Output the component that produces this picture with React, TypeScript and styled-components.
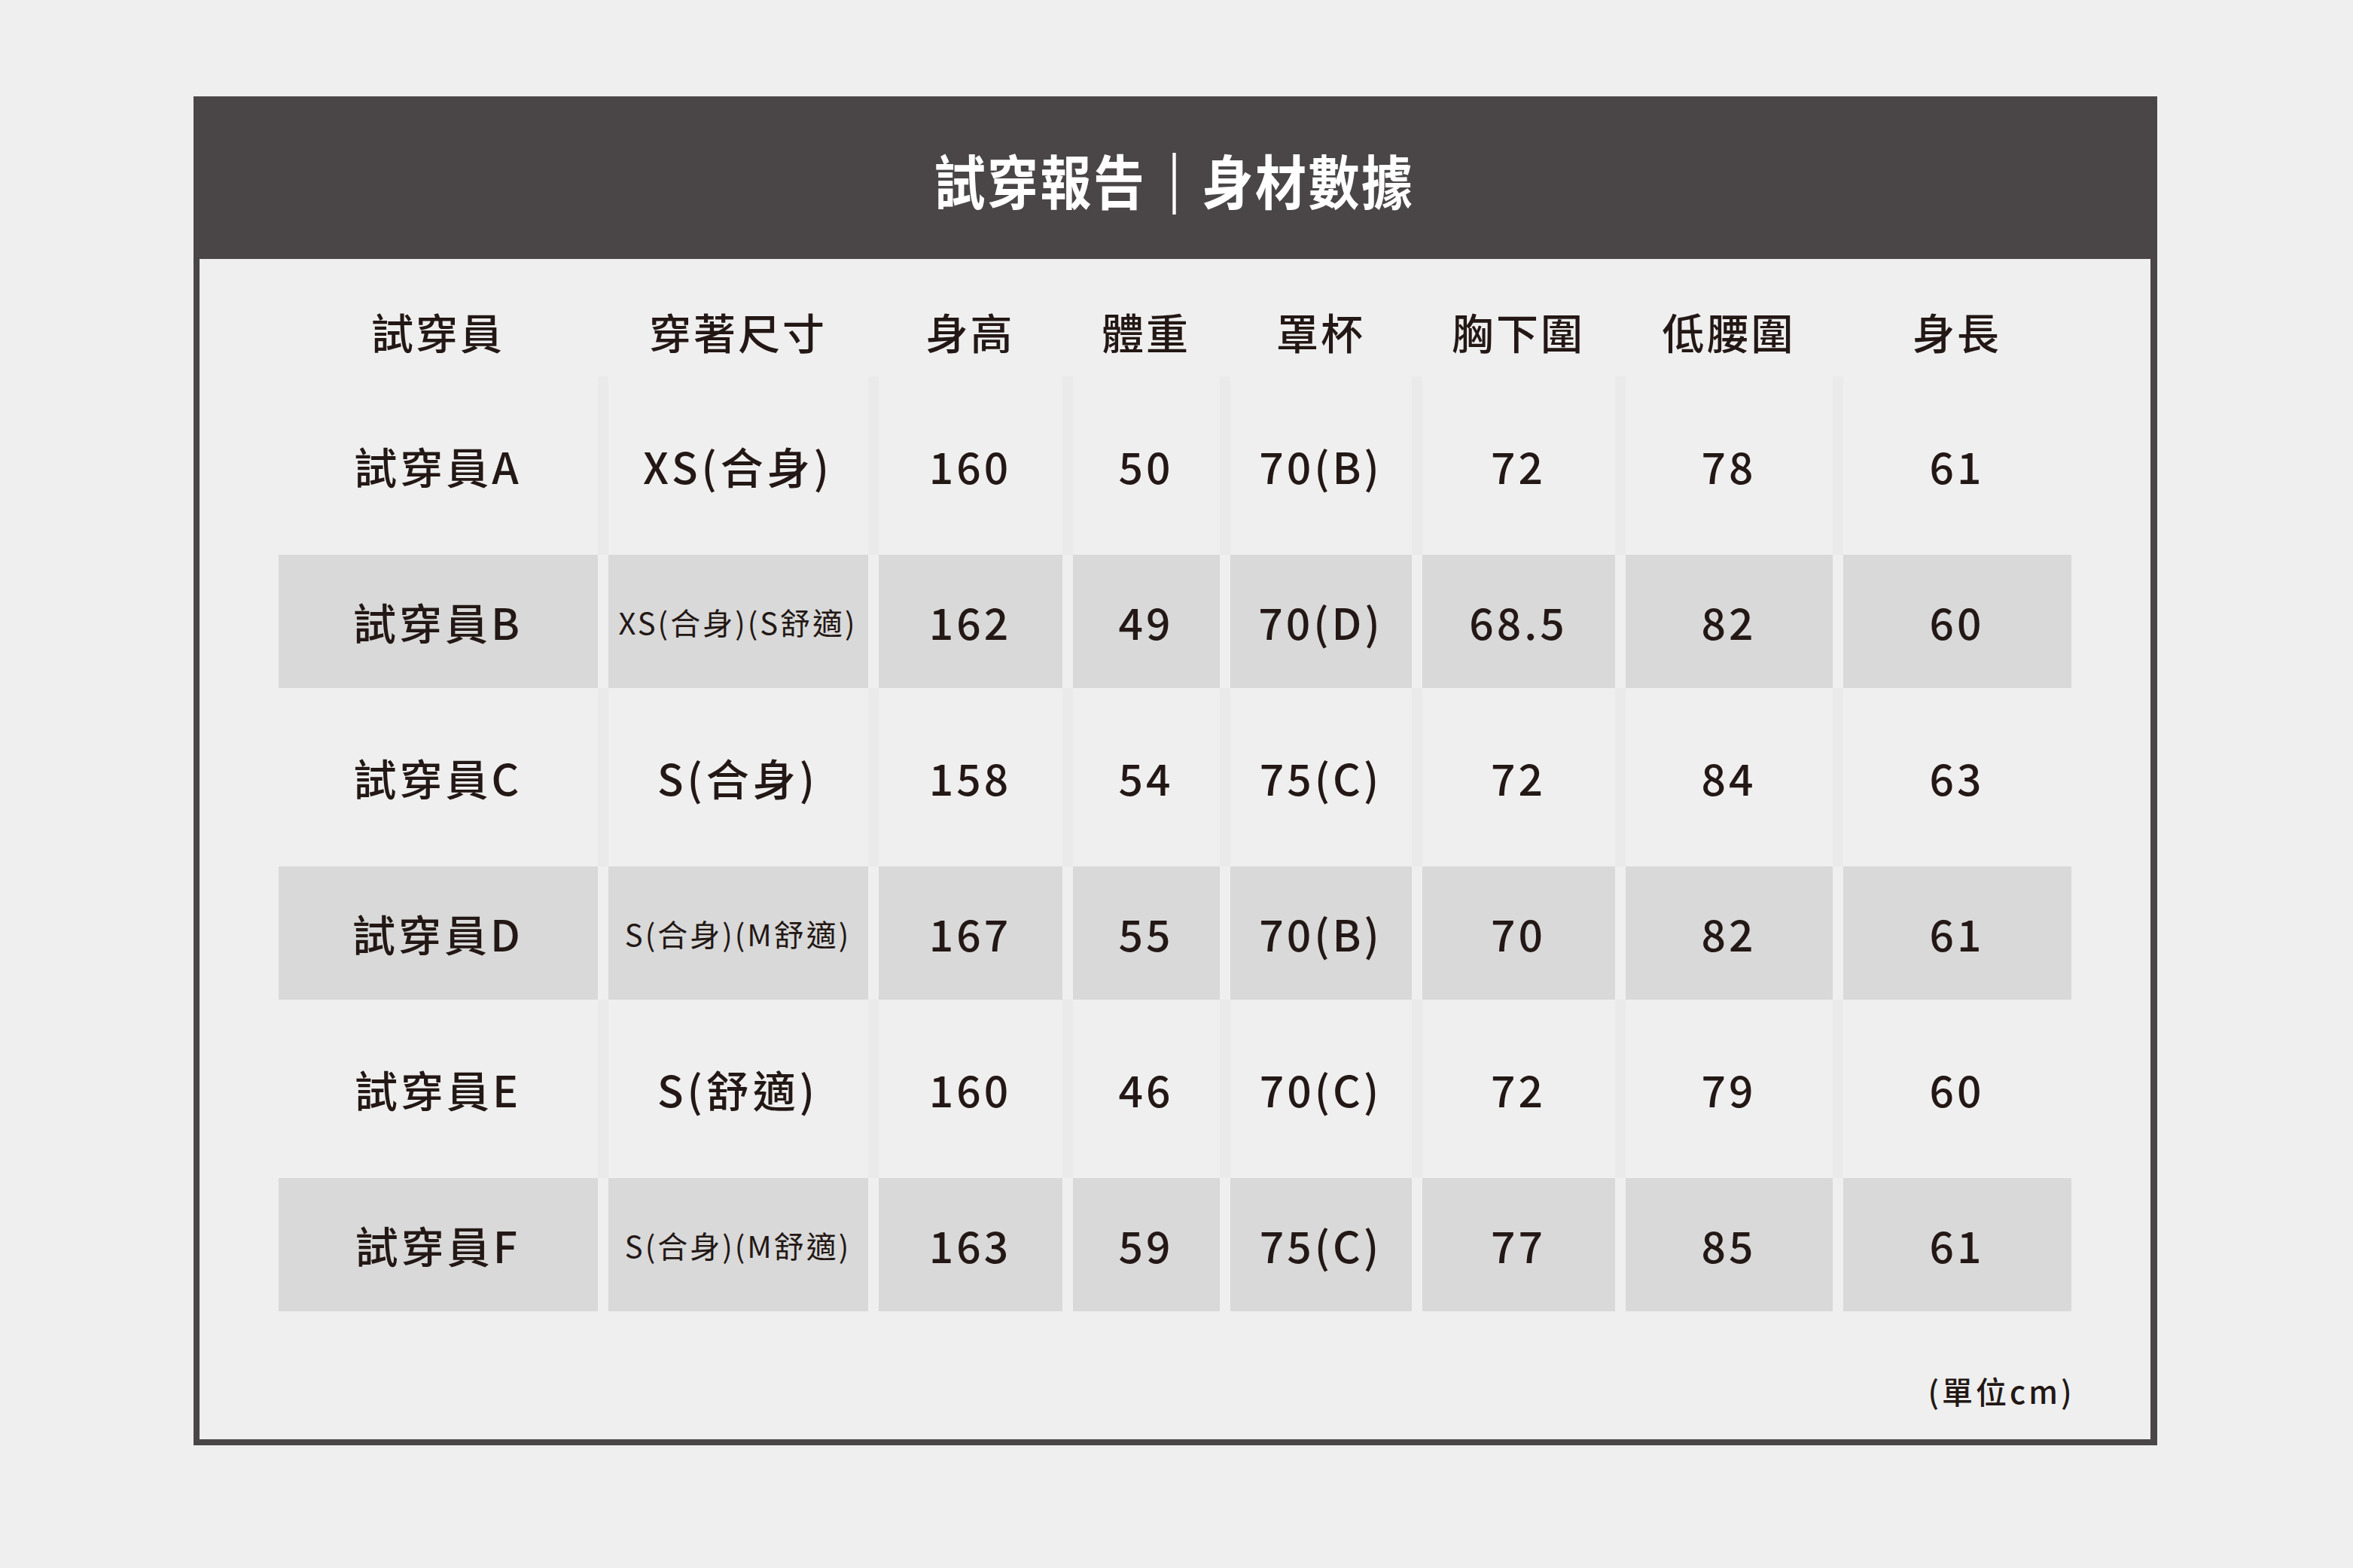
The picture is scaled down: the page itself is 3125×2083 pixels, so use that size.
import styled, { createGlobalStyle } from 'styled-components';

const COLUMNS = '424px 345px 244px 195px 241px 256px 275px 303px';

const HEADERS = ['試穿員', '穿著尺寸', '身高', '體重', '罩杯', '胸下圍', '低腰圍', '身長'];

type Fitting = {
  name: string;
  size: string;
  compact?: boolean;
  values: string[];
};

const FITTINGS: Fitting[] = [
  { name: '試穿員A', size: 'XS(合身)', values: ['160', '50', '70(B)', '72', '78', '61'] },
  { name: '試穿員B', size: 'XS(合身)(S舒適)', compact: true, values: ['162', '49', '70(D)', '68.5', '82', '60'] },
  { name: '試穿員C', size: 'S(合身)', values: ['158', '54', '75(C)', '72', '84', '63'] },
  { name: '試穿員D', size: 'S(合身)(M舒適)', compact: true, values: ['167', '55', '70(B)', '70', '82', '61'] },
  { name: '試穿員E', size: 'S(舒適)', values: ['160', '46', '70(C)', '72', '79', '60'] },
  { name: '試穿員F', size: 'S(合身)(M舒適)', compact: true, values: ['163', '59', '75(C)', '77', '85', '61'] },
];

export default function App() {
  return (
    <>
      <GlobalStyle />
      <Page>
        <Frame>
          <TitleBar>
            <Title>
              <span>試穿報告</span>
              <Divider />
              <span>身材數據</span>
            </Title>
          </TitleBar>

          <Body>
            <HeaderRow>
              {HEADERS.map((h) => (
                <HeaderCell key={h}>{h}</HeaderCell>
              ))}
            </HeaderRow>

            {FITTINGS.map((f, i) => {
              const shaded = i % 2 === 1;
              return (
                <Row key={f.name} $shaded={shaded}>
                  <Cell $shaded={shaded}>{f.name}</Cell>
                  <Cell $shaded={shaded}>
                    <SizeText $compact={!!f.compact}>{f.size}</SizeText>
                  </Cell>
                  {f.values.map((v, j) => (
                    <Cell key={j} $shaded={shaded}>
                      {v}
                    </Cell>
                  ))}
                </Row>
              );
            })}

            <Footer>
              <Note>(單位cm)</Note>
            </Footer>
          </Body>
        </Frame>
      </Page>
    </>
  );
}

const GlobalStyle = createGlobalStyle`
  html, body {
    margin: 0;
    padding: 0;
    background: #efefef;
  }
  body {
    font-family: "Noto Sans CJK TC", "Noto Sans", sans-serif;
    color: #231815;
  }
`;

const Page = styled.div`
  width: 3125px;
  height: 2083px;
  box-sizing: border-box;
  padding-top: 128px;
  display: flex;
  flex-direction: column;
  align-items: center;
  background: #efefef;
`;

const Frame = styled.section`
  width: 2608px;
  box-sizing: border-box;
  border: 8px solid #4a4647;
  border-right-width: 9px;
  background: #efefef;
  margin-left: -4px;
`;

const TitleBar = styled.header`
  height: 208px;
  background: #4a4647;
  display: flex;
  align-items: center;
  justify-content: center;
`;

const Title = styled.h1`
  margin: 0;
  display: inline-flex;
  align-items: center;
  gap: 40px;
  color: #fff;
  font-size: 78px;
  font-weight: 700;
  letter-spacing: 3px;
  line-height: 1;
  transform: scaleX(0.87);
  margin-top: -4px;
`;

const Divider = styled.span`
  display: block;
  width: 5px;
  height: 82px;
  background: #fff;
  margin-top: 12px;
`;

const Body = styled.div`
  padding: 36px 0 0 105px;
`;

const HeaderRow = styled.div`
  display: grid;
  grid-template-columns: ${COLUMNS};
  column-gap: 14px;
  height: 120px;
  align-items: center;
`;

const HeaderCell = styled.div`
  text-align: center;
  font-size: 56px;
  font-weight: 500;
  letter-spacing: 3px;
  line-height: 1;
`;

const Row = styled.div<{ $shaded: boolean }>`
  display: grid;
  grid-template-columns: ${COLUMNS};
  column-gap: 14px;
  width: max-content;
  height: ${({ $shaded }) => ($shaded ? 177 : 237)}px;
  background: ${({ $shaded }) => ($shaded ? 'transparent' : '#eaeaea')};
`;

const Cell = styled.div<{ $shaded: boolean }>`
  display: flex;
  align-items: center;
  justify-content: center;
  background: ${({ $shaded }) => ($shaded ? '#d9d9d9' : '#efefef')};
  font-size: 57px;
  font-weight: 500;
  letter-spacing: 4px;
  line-height: 1;
  white-space: nowrap;
`;

const SizeText = styled.span<{ $compact: boolean }>`
  font-size: ${({ $compact }) => ($compact ? 40 : 57)}px;
  font-weight: ${({ $compact }) => ($compact ? 400 : 500)};
  letter-spacing: ${({ $compact }) => ($compact ? 3 : 5)}px;
`;

const Footer = styled.div`
  display: flex;
  justify-content: flex-end;
  padding: 75px 100px 35px 0;
`;

const Note = styled.span`
  font-size: 41px;
  font-weight: 500;
  letter-spacing: 4px;
  line-height: 60px;
`;
